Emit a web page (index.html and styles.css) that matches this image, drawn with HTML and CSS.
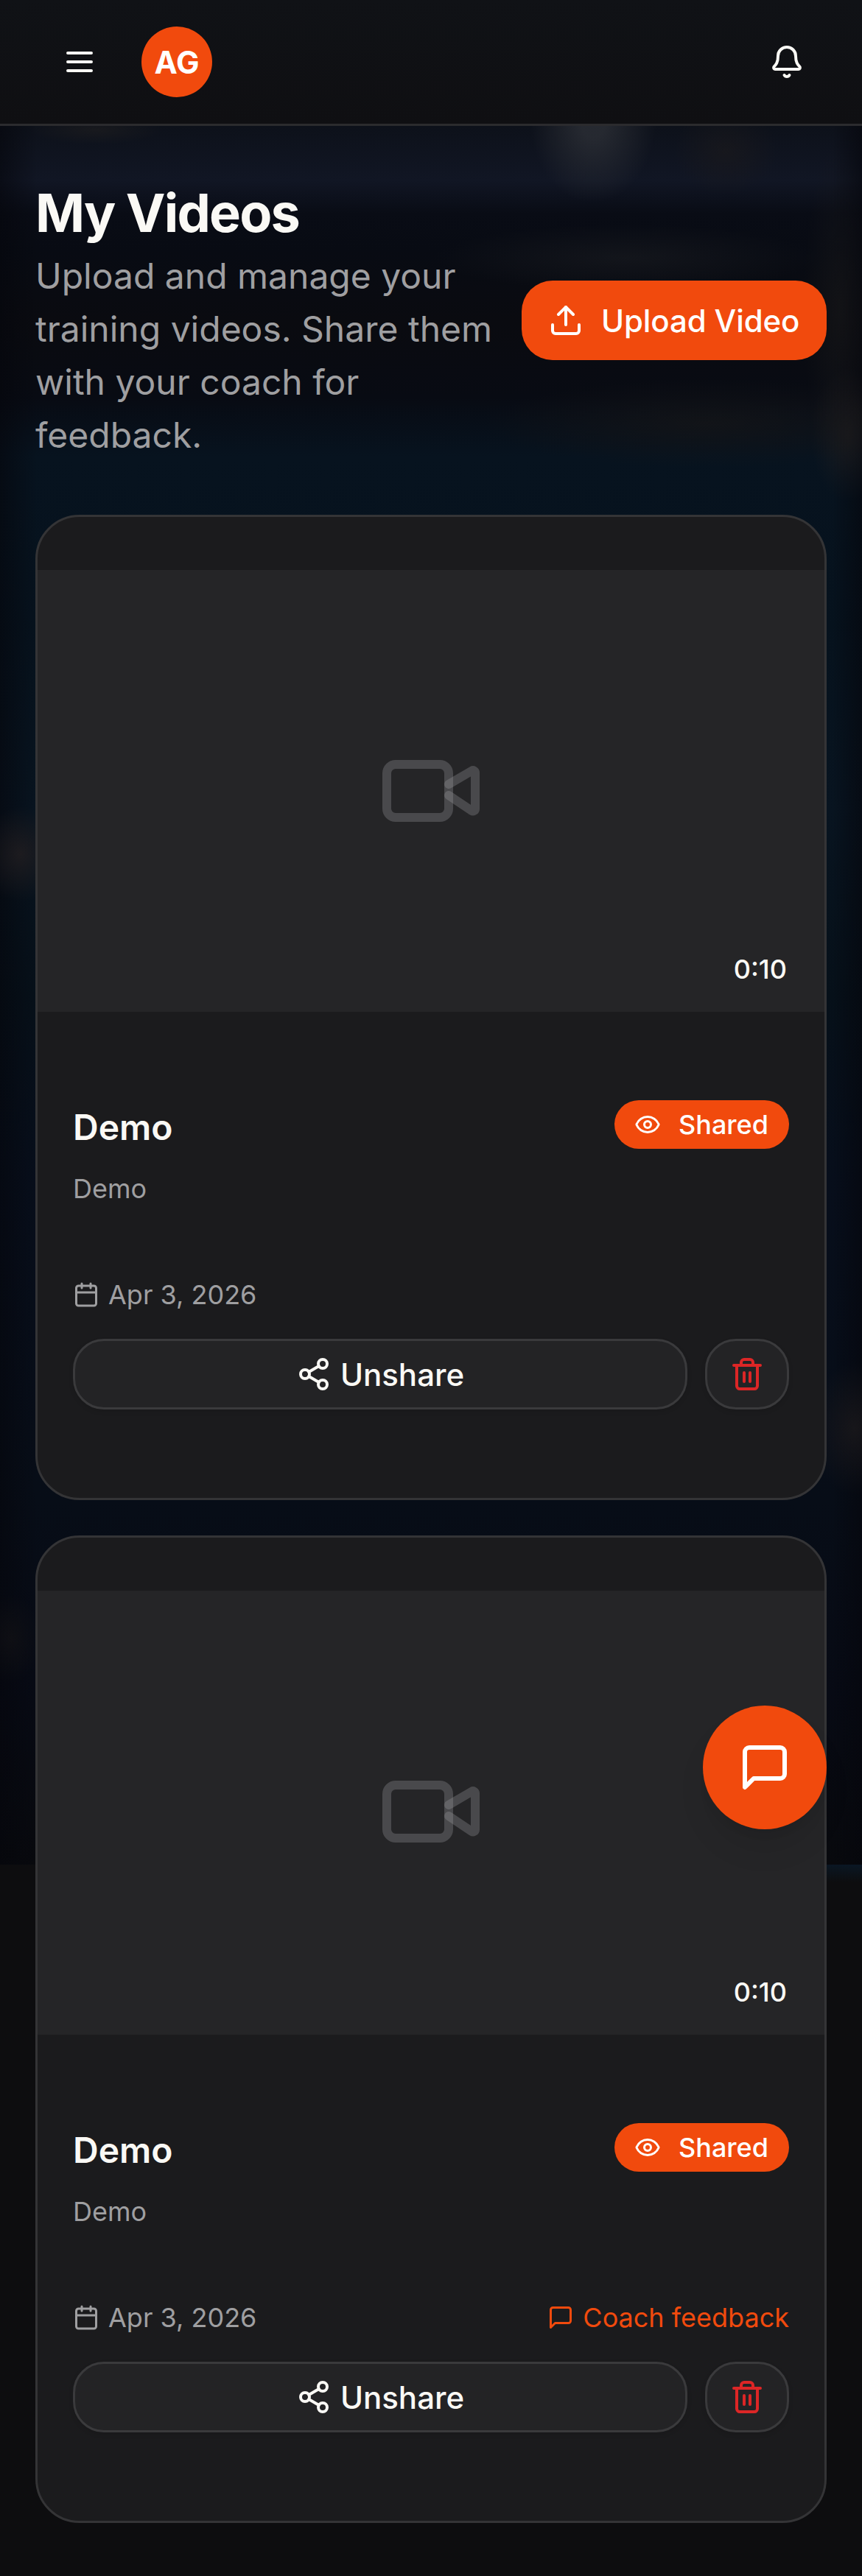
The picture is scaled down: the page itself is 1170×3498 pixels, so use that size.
FILE: index.html
```html
<!DOCTYPE html>
<html lang="en">
<head>
    <meta charset="UTF-8">
    <meta name="viewport" content="width=device-width, initial-scale=1.0">
    <title>My Videos</title>
    <link rel="stylesheet" href="styles.css">
</head>
<body>
    <!-- Shared icon shapes -->
    <svg class="sprite" aria-hidden="true">
        <symbol id="i-menu" viewBox="0 0 24 24"><path d="M4 6h16M4 12h16M4 18h16"/></symbol>
        <symbol id="i-bell" viewBox="0 0 24 24"><path d="M10.268 21a2 2 0 0 0 3.464 0"/><path d="M3.262 15.326A1 1 0 0 0 4 17h16a1 1 0 0 0 .74-1.673C19.41 13.956 18 12.499 18 8A6 6 0 0 0 6 8c0 4.499-1.411 5.956-2.738 7.326"/></symbol>
        <symbol id="i-upload" viewBox="0 0 24 24"><path d="M12 3v12"/><path d="m17 8-5-5-5 5"/><path d="M21 15v4a2 2 0 0 1-2 2H5a2 2 0 0 1-2-2v-4"/></symbol>
        <symbol id="i-video" viewBox="0 0 24 24"><path d="m16 13 5.223 3.482a.5.5 0 0 0 .777-.416V7.87a.5.5 0 0 0-.752-.432L16 10.5"/><rect x="2" y="6" width="14" height="12" rx="2"/></symbol>
        <symbol id="i-eye" viewBox="0 0 24 24"><path d="M2.062 12.348a1 1 0 0 1 0-.696 10.75 10.75 0 0 1 19.876 0 1 1 0 0 1 0 .696 10.75 10.75 0 0 1-19.876 0"/><circle cx="12" cy="12" r="3"/></symbol>
        <symbol id="i-calendar" viewBox="0 0 24 24"><path d="M8 2v4M16 2v4"/><rect x="3" y="4" width="18" height="18" rx="2"/><path d="M3 10h18"/></symbol>
        <symbol id="i-share" viewBox="0 0 24 24"><circle cx="18" cy="5" r="3"/><circle cx="6" cy="12" r="3"/><circle cx="18" cy="19" r="3"/><path d="m8.59 13.51 6.83 3.98M15.41 6.51l-6.82 3.98"/></symbol>
        <symbol id="i-trash" viewBox="0 0 24 24"><path d="M3 6h18M19 6v14c0 1-1 2-2 2H7c-1 0-2-1-2-2V6M8 6V4c0-1 1-2 2-2h4c1 0 2 1 2 2v2M10 11v6M14 11v6"/></symbol>
        <symbol id="i-message" viewBox="0 0 24 24"><path d="M21 15a2 2 0 0 1-2 2H7l-4 4V5a2 2 0 0 1 2-2h14a2 2 0 0 1 2 2z"/></symbol>
    </svg>

    <div class="backdrop"></div>

    <header class="topbar">
        <button class="icon-btn" aria-label="Menu"><svg class="icon"><use href="#i-menu"/></svg></button>
        <div class="avatar">AG</div>
        <button class="icon-btn bell" aria-label="Notifications"><svg class="icon"><use href="#i-bell"/></svg></button>
    </header>

    <main class="page">
        <div class="page-header">
            <div class="page-intro">
                <h1 class="title">My Videos</h1>
                <p class="subtitle">Upload and manage your training videos. Share them with your coach for feedback.</p>
            </div>
            <button class="upload-btn"><svg class="icon"><use href="#i-upload"/></svg>Upload Video</button>
        </div>

        <div class="videos">
            <article class="card">
                <div class="thumb">
                    <svg class="icon thumb-icon"><use href="#i-video"/></svg>
                    <span class="duration">0:10</span>
                </div>
                <div class="card-header">
                    <div>
                        <h2 class="card-title">Demo</h2>
                        <p class="card-desc">Demo</p>
                    </div>
                    <span class="badge"><svg class="icon"><use href="#i-eye"/></svg>Shared</span>
                </div>
                <div class="card-content">
                    <div class="meta">
                        <span class="meta-item"><svg class="icon"><use href="#i-calendar"/></svg>Apr 3, 2026</span>
                    </div>
                    <div class="actions">
                        <button class="btn btn-share"><svg class="icon"><use href="#i-share"/></svg>Unshare</button>
                        <button class="btn btn-delete" aria-label="Delete"><svg class="icon"><use href="#i-trash"/></svg></button>
                    </div>
                </div>
            </article>

            <article class="card">
                <div class="thumb">
                    <svg class="icon thumb-icon"><use href="#i-video"/></svg>
                    <span class="duration">0:10</span>
                </div>
                <div class="card-header">
                    <div>
                        <h2 class="card-title">Demo</h2>
                        <p class="card-desc">Demo</p>
                    </div>
                    <span class="badge"><svg class="icon"><use href="#i-eye"/></svg>Shared</span>
                </div>
                <div class="card-content">
                    <div class="meta">
                        <span class="meta-item"><svg class="icon"><use href="#i-calendar"/></svg>Apr 3, 2026</span>
                        <span class="meta-item feedback"><svg class="icon"><use href="#i-message"/></svg>Coach feedback</span>
                    </div>
                    <div class="actions">
                        <button class="btn btn-share"><svg class="icon"><use href="#i-share"/></svg>Unshare</button>
                        <button class="btn btn-delete" aria-label="Delete"><svg class="icon"><use href="#i-trash"/></svg></button>
                    </div>
                </div>
            </article>
        </div>
    </main>

    <button class="chat-btn" aria-label="Open chat"><svg class="icon"><use href="#i-message"/></svg></button>
</body>
</html>
```

FILE: styles.css
```css
* {
    margin: 0;
    padding: 0;
    box-sizing: border-box;
}

body {
    position: relative;
    min-height: 100vh;
    font-family: Inter, 'Liberation Sans', sans-serif;
    background: #0d0d0f;
    color: #faf9f5;
}

button {
    font: inherit;
    color: inherit;
    border: none;
    background: none;
    cursor: pointer;
}

.sprite {
    display: none;
}

.icon {
    width: 48px;
    height: 48px;
    flex-shrink: 0;
    fill: none;
    stroke: currentColor;
    stroke-width: 2;
    stroke-linecap: round;
    stroke-linejoin: round;
}

/* Blurred gym photo behind the first screen */
.backdrop {
    position: absolute;
    inset: 0 0 auto 0;
    height: 2532px;
    background:
        radial-gradient(ellipse 85px 110px at 805px 165px, rgba(44, 47, 54, 0.8) 20%, transparent 100%),
        radial-gradient(ellipse 70px 60px at 985px 205px, rgba(28, 26, 28, 0.6), transparent),
        radial-gradient(ellipse 90px 20px at 130px 176px, rgba(32, 31, 32, 0.6), transparent),
        radial-gradient(ellipse 260px 45px at 850px 350px, rgba(26, 28, 33, 0.6), transparent),
        radial-gradient(ellipse 300px 60px at 960px 575px, rgba(22, 22, 24, 0.7), transparent),
        radial-gradient(ellipse 50px 90px at 1150px 590px, rgba(36, 32, 32, 0.6), transparent),
        radial-gradient(ellipse 50px 230px at 1140px 420px, rgba(24, 24, 26, 0.6), transparent),
        radial-gradient(ellipse 55px 65px at 28px 1160px, rgba(36, 31, 33, 0.75), transparent),
        radial-gradient(ellipse 60px 90px at 1160px 1940px, rgba(30, 27, 29, 0.7), transparent),
        radial-gradient(ellipse 40px 60px at 15px 2225px, rgba(20, 19, 22, 0.6), transparent),
        linear-gradient(90deg, rgba(5, 6, 12, 0.6), transparent 50px, transparent 1130px, rgba(5, 6, 12, 0.6)),
        linear-gradient(180deg, #0d0f16 0, #0d111a 170px, #111624 245px, #090c15 290px, #080b13 340px, #0a0b10 440px, #080b13 540px, #07131f 620px, #06121d 850px, #081420 1100px, #061019 1350px, #070e1b 1600px, #070d17 2040px, #070a14 2300px, #08090d 2531px);
}

/* The photo's edge bleeding past the first screen */
.backdrop::after {
    content: "";
    position: absolute;
    top: 100%;
    right: 0;
    width: 100%;
    height: 24px;
    background:
        linear-gradient(90deg, #0d0d0f 10%, transparent),
        linear-gradient(180deg, #0a1724, #0d0d0f);
}

.topbar {
    position: relative;
    display: flex;
    align-items: center;
    gap: 24px;
    height: 171px;
    padding: 0 48px;
    background: linear-gradient(180deg, #101216, #0f0f12);
    border-bottom: 3px solid #2b2b2e;
}

.icon-btn {
    display: flex;
    align-items: center;
    justify-content: center;
    width: 120px;
    height: 120px;
}

.bell {
    width: 108px;
    margin-left: auto;
}

.avatar {
    display: flex;
    align-items: center;
    justify-content: center;
    width: 96px;
    height: 96px;
    border-radius: 50%;
    background: #f14a0d;
    color: #fff;
    font-size: 42px;
    font-weight: 700;
}

.page {
    position: relative;
    padding: 72px 48px;
}

.page-header {
    display: flex;
    align-items: center;
    justify-content: space-between;
    gap: 24px;
    margin-bottom: 72px;
}

.title {
    margin-bottom: 5px;
    font-size: 72px;
    font-weight: 700;
    line-height: 91px;
    letter-spacing: -0.025em;
}

.subtitle {
    font-size: 48px;
    line-height: 72px;
    color: #9f9fa1;
}

.upload-btn {
    display: flex;
    align-items: center;
    flex-shrink: 0;
    gap: 24px;
    width: 414px;
    height: 108px;
    padding-left: 36px;
    border-radius: 42px;
    background: #f14a0d;
    color: #fff;
    font-size: 42px;
    font-weight: 500;
    letter-spacing: -0.003em;
    white-space: nowrap;
}

.videos {
    display: grid;
    gap: 48px;
}

.card {
    display: flex;
    flex-direction: column;
    padding: 72px 0;
    border: 3px solid #343436;
    border-radius: 60px;
    background: #1b1b1d;
    overflow: hidden;
}

.thumb {
    position: relative;
    display: flex;
    align-items: center;
    justify-content: center;
    height: 600px;
    background: #252527;
}

.card:last-child .thumb {
    height: 603px;
    padding-bottom: 3px;
}

.thumb-icon {
    width: 144px;
    height: 144px;
    stroke: rgba(159, 159, 161, 0.3);
}

.duration {
    position: absolute;
    right: 24px;
    bottom: 24px;
    padding: 6px 27px;
    font-size: 36px;
    font-weight: 500;
    line-height: 56px;
}

.card-header {
    display: flex;
    align-items: flex-start;
    justify-content: space-between;
    padding: 120px 48px 0;
}

.card-title {
    font-size: 48px;
    font-weight: 600;
    line-height: 74px;
}

.card-desc {
    margin-top: 22px;
    font-size: 36px;
    line-height: 48px;
    color: #9f9fa1;
}

.badge {
    display: flex;
    align-items: center;
    gap: 24px;
    width: 237px;
    height: 66px;
    padding-left: 27px;
    border-radius: 33px;
    background: #f14a0d;
    color: #fff;
    font-size: 36px;
    font-weight: 500;
}

.badge .icon,
.meta .icon {
    width: 36px;
    height: 36px;
}

.card-content {
    padding: 96px 48px 48px;
}

.meta {
    display: flex;
    align-items: center;
    justify-content: space-between;
    margin-bottom: 36px;
    font-size: 36px;
    line-height: 48px;
    color: #9f9fa1;
}

.meta-item {
    display: flex;
    align-items: center;
    gap: 12px;
}

.feedback {
    color: #f14a0d;
}

.actions {
    display: flex;
    gap: 24px;
}

.btn {
    display: flex;
    align-items: center;
    justify-content: center;
    gap: 12px;
    height: 96px;
    border: 3px solid #3a3a3c;
    border-radius: 42px;
    background: #232325;
    box-shadow: 0 3px 6px rgba(0, 0, 0, 0.1);
    font-size: 42px;
    font-weight: 500;
}

.btn-share {
    flex: 1;
}

.btn-delete {
    width: 114px;
    color: #dc2626;
}

/* Floating over the page, bottom right of the first screen */
.chat-btn {
    position: absolute;
    top: 2316px;
    right: 48px;
    display: flex;
    align-items: center;
    justify-content: center;
    width: 168px;
    height: 168px;
    border-radius: 50%;
    background: #f14a0d;
    color: #fff;
    box-shadow: 0 30px 45px -9px rgba(0, 0, 0, 0.1), 0 12px 18px -12px rgba(0, 0, 0, 0.1);
}

.chat-btn .icon {
    width: 72px;
    height: 72px;
}
```
